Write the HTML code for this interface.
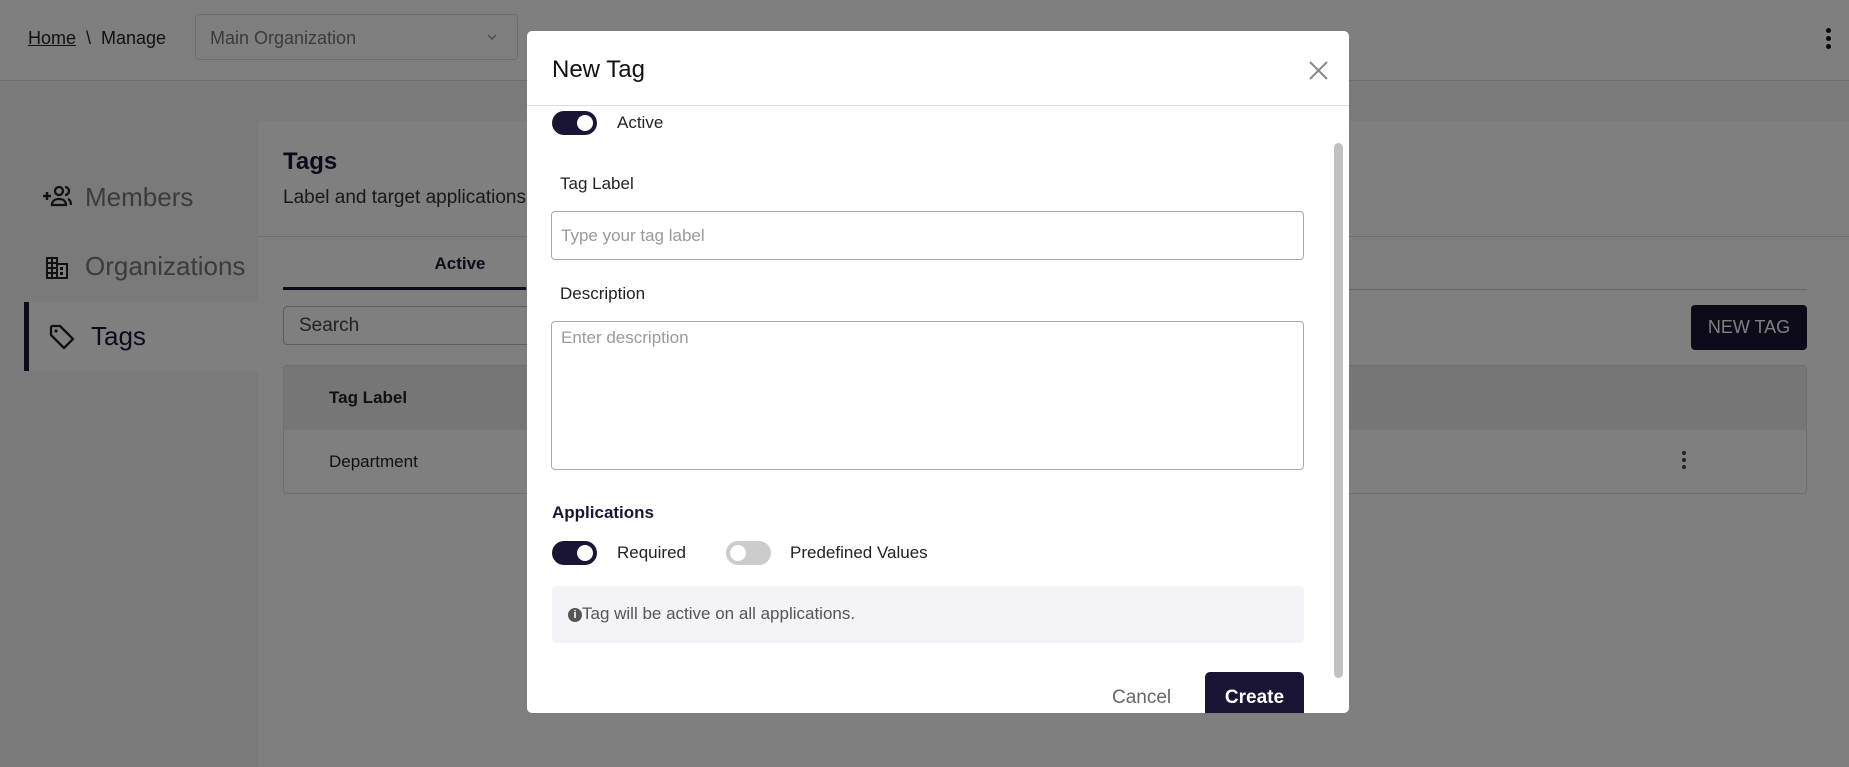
<!DOCTYPE html>
<html><head><meta charset="utf-8"><style>
*{box-sizing:border-box;margin:0;padding:0}
body{width:1849px;height:767px;overflow:hidden;font-family:"Liberation Sans",Arial,sans-serif;background:#f4f4f4;position:relative;color:#222}
.abs{position:absolute}
.top{left:0;top:0;width:1849px;height:81px;background:#fff;border-bottom:1px solid #ddd}
.overlay{left:0;top:0;width:1849px;height:767px;background:rgba(0,0,0,.5)}
.modal{left:527px;top:31px;width:822px;height:682px;background:#fff;border-radius:5px;overflow:hidden}
.tog{width:45px;height:24px;border-radius:12px;background:#1a1535}
.tog::after{content:"";position:absolute;right:4px;top:4px;width:16px;height:16px;border-radius:50%;background:#fff}
.tog.off{background:#ccc}
.tog.off::after{left:4px;right:auto}
.lbl{font-size:17px;color:#222}
</style></head><body>
<div class="abs top"></div>
<div class="abs" style="left:28px;top:28px;font-size:18px;color:#222"><u>Home</u> &nbsp;\&nbsp; Manage</div>
<div class="abs" style="left:195px;top:14px;width:323px;height:46px;border:1px solid #ddd;border-radius:4px;font-size:18px;color:#777;padding:13px 14px">Main Organization<svg style="position:absolute;right:20px;top:19px" width="10" height="7" viewBox="0 0 10 7"><path d="M1 1l4 4 4-4" stroke="#999" stroke-width="1.5" fill="none"/></svg></div>
<div class="abs" style="left:1826px;top:28px;width:5px">
<div style="width:5px;height:5px;border-radius:50%;background:#111;margin-bottom:3px"></div><div style="width:5px;height:5px;border-radius:50%;background:#111;margin-bottom:3px"></div><div style="width:5px;height:5px;border-radius:50%;background:#111"></div></div>
<div class="abs" style="left:258px;top:121px;width:1591px;height:646px;background:#fff"></div>
<div class="abs" style="left:258px;top:236px;width:1591px;height:1px;background:#ddd"></div>
<div class="abs" style="left:283px;top:148px;font-size:24px;font-weight:bold;color:#1a1535">Tags</div>
<div class="abs" style="left:283px;top:187px;font-size:19px;color:#333">Label and target applications</div>
<div class="abs" style="left:360px;top:254px;width:200px;text-align:center;font-size:17px;font-weight:bold;color:#1a1535">Active</div>
<div class="abs" style="left:283px;top:289px;width:1524px;height:1px;background:#ccc"></div>
<div class="abs" style="left:283px;top:287px;width:243px;height:3px;background:#1a1535"></div>
<div class="abs" style="left:283px;top:306px;width:300px;height:39px;border:1px solid #bbb;border-radius:4px;font-size:19px;color:#444;padding:8px 15px">Search</div>
<div class="abs" style="left:1691px;top:305px;width:116px;height:45px;background:#1a1535;border-radius:4px;color:#fff;font-size:18px;text-align:center;line-height:45px">NEW TAG</div>
<div class="abs" style="left:283px;top:365px;width:1524px;height:129px;border:1px solid #ddd;border-radius:4px;overflow:hidden">
<div style="height:64px;background:#ececec"></div></div>
<div class="abs" style="left:329px;top:388px;font-size:17px;font-weight:bold">Tag Label</div>
<div class="abs" style="left:329px;top:452px;font-size:17px">Department</div>
<div class="abs" style="left:1682px;top:451px;width:5px"><div style="width:4px;height:4px;border-radius:50%;background:#444;margin-bottom:3px"></div><div style="width:4px;height:4px;border-radius:50%;background:#444;margin-bottom:3px"></div><div style="width:4px;height:4px;border-radius:50%;background:#444"></div></div>
<div class="abs" style="left:24px;top:302px;width:234px;height:69px;background:#fff;border-left:5px solid #1a1535"></div>
<svg class="abs" style="left:42px;top:184px" width="30" height="24" viewBox="0 0 30 24"><path d="M1 12h8M5 8v8" stroke="#222" stroke-width="2.5"/><circle cx="17" cy="7" r="4" stroke="#222" stroke-width="2.3" fill="none"/><path d="M10 21c0-4 3-6 7-6s7 2 7 6z" stroke="#222" stroke-width="2.3" fill="none"/><path d="M23 3a4 4 0 010 8M26 15c2 1 3 3 3 6" stroke="#222" stroke-width="2.3" fill="none"/></svg>
<div class="abs" style="left:85px;top:182px;font-size:26px;color:#777">Members</div>
<svg class="abs" style="left:45px;top:256px" width="24" height="24" viewBox="0 0 24 24"><path d="M1 23V1h12v6h10v16z" fill="#222"/><g fill="#fff"><rect x="3" y="3" width="3" height="3"/><rect x="8" y="3" width="3" height="3"/><rect x="3" y="8" width="3" height="3"/><rect x="8" y="8" width="3" height="3"/><rect x="3" y="13" width="3" height="3"/><rect x="8" y="13" width="3" height="3"/><rect x="3" y="18" width="3" height="3"/><rect x="8" y="18" width="3" height="3"/><rect x="13" y="9" width="8" height="12"/></g><g fill="#222"><rect x="15" y="11" width="3" height="3"/><rect x="15" y="16" width="3" height="3"/></g></svg>
<div class="abs" style="left:85px;top:251px;font-size:26px;color:#777">Organizations</div>
<svg class="abs" style="left:49px;top:324px" width="26" height="26" viewBox="0 0 26 26"><path d="M2 3v8l13 13 9-9L11 2H3z" stroke="#222" stroke-width="2.3" fill="none" stroke-linejoin="round"/><circle cx="7" cy="7" r="1.6" fill="#222"/></svg>
<div class="abs" style="left:91px;top:321px;font-size:26px;color:#1a1535">Tags</div>
<div class="abs overlay"></div>
<div class="abs modal">
<div class="abs" style="left:25px;top:25px;font-size:24px;color:#111">New Tag</div>
<svg class="abs" style="left:782px;top:30px" width="19" height="19" viewBox="0 0 19 19"><path d="M1 1l17 17M18 1L1 18" stroke="#888" stroke-width="2"/></svg>
<div class="abs" style="left:0;top:74px;width:822px;height:1px;background:#ddd"></div>
<div class="abs tog" style="left:25px;top:80px"></div>
<div class="abs lbl" style="left:90px;top:82px">Active</div>
<div class="abs lbl" style="left:33px;top:143px;font-weight:500">Tag Label</div>
<div class="abs" style="left:24px;top:180px;width:753px;height:49px;border:1px solid #aaa;border-radius:4px;font-size:17px;color:#999;padding:14px 9px">Type your tag label</div>
<div class="abs lbl" style="left:33px;top:253px">Description</div>
<div class="abs" style="left:24px;top:290px;width:753px;height:149px;border:1px solid #aaa;border-radius:4px;font-size:17px;color:#999;padding:6px 9px">Enter description</div>
<div class="abs" style="left:25px;top:472px;font-size:17px;font-weight:bold;color:#1a1535">Applications</div>
<div class="abs tog" style="left:25px;top:510px"></div>
<div class="abs lbl" style="left:90px;top:512px">Required</div>
<div class="abs tog off" style="left:199px;top:510px"></div>
<div class="abs lbl" style="left:263px;top:512px">Predefined Values</div>
<div class="abs" style="left:25px;top:555px;width:752px;height:57px;background:#f4f4f8;border-radius:4px;font-size:17px;color:#555;padding:18px 16px"><span style="display:inline-block;width:14px;height:14px;border-radius:50%;background:#555;color:#fff;font-size:11px;text-align:center;line-height:14px;font-weight:bold;vertical-align:1px">i</span>Tag will be active on all applications.</div>
<div class="abs" style="left:585px;top:656px;font-size:19px;color:#666">Cancel</div>
<div class="abs" style="left:678px;top:641px;width:99px;height:60px;background:#1a1535;border-radius:5px;color:#fff;font-size:19px;font-weight:bold;text-align:center;padding-top:15px">Create</div>
<div class="abs" style="left:807px;top:112px;width:9px;height:535px;background:#c1c1c1;border-radius:5px"></div>
</div>
</body></html>
